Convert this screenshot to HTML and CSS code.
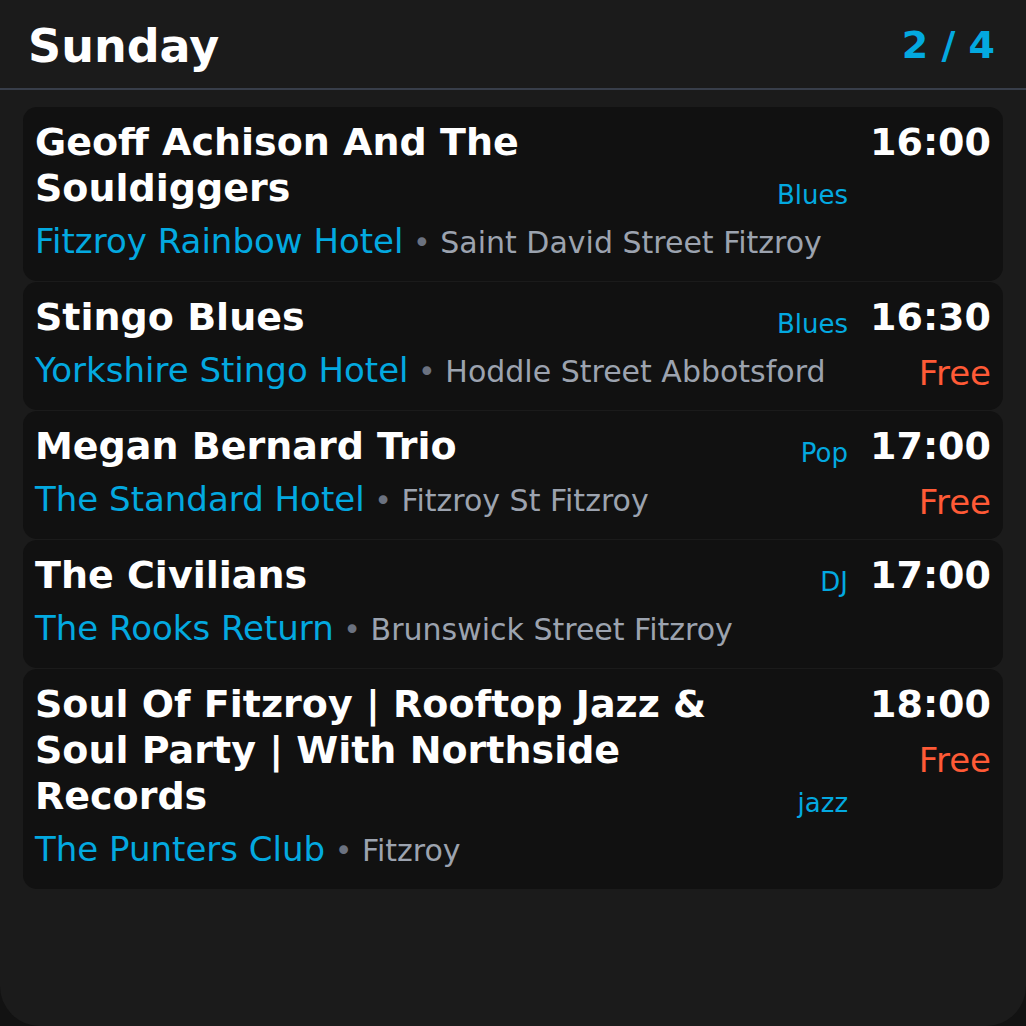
FILE: index.html
```html
<!DOCTYPE html>
<html lang="en">
<head>
<meta charset="utf-8">
<title>Sunday</title>
<link rel="stylesheet" href="styles.css">
</head>
<body>
<div class="app">
  <header class="top">
    <h1 class="day">Sunday</h1>
    <span class="count">2 / 4</span>
  </header>
  <div class="list">
    <div class="card">
      <div class="main">
        <div class="head">
          <div class="title">Geoff Achison And The Souldiggers</div>
          <div class="genre">Blues</div>
        </div>
        <div class="where"><span class="venue">Fitzroy Rainbow Hotel</span><span class="addr"> <span class="dot">•</span> Saint David Street Fitzroy</span></div>
      </div>
      <div class="side">
        <div class="time">16:00</div>
      </div>
    </div>
    <div class="card">
      <div class="main">
        <div class="head">
          <div class="title">Stingo Blues</div>
          <div class="genre">Blues</div>
        </div>
        <div class="where"><span class="venue">Yorkshire Stingo Hotel</span><span class="addr"> <span class="dot">•</span> Hoddle Street Abbotsford</span></div>
      </div>
      <div class="side">
        <div class="time">16:30</div>
        <div class="price">Free</div>
      </div>
    </div>
    <div class="card">
      <div class="main">
        <div class="head">
          <div class="title">Megan Bernard Trio</div>
          <div class="genre">Pop</div>
        </div>
        <div class="where"><span class="venue">The Standard Hotel</span><span class="addr"> <span class="dot">•</span> Fitzroy St Fitzroy</span></div>
      </div>
      <div class="side">
        <div class="time">17:00</div>
        <div class="price">Free</div>
      </div>
    </div>
    <div class="card">
      <div class="main">
        <div class="head">
          <div class="title">The Civilians</div>
          <div class="genre">DJ</div>
        </div>
        <div class="where"><span class="venue">The Rooks Return</span><span class="addr"> <span class="dot">•</span> Brunswick Street Fitzroy</span></div>
      </div>
      <div class="side">
        <div class="time">17:00</div>
      </div>
    </div>
    <div class="card">
      <div class="main">
        <div class="head">
          <div class="title">Soul Of Fitzroy | Rooftop Jazz &amp; Soul Party | With Northside Records</div>
          <div class="genre">jazz</div>
        </div>
        <div class="where"><span class="venue">The Punters Club</span><span class="addr"> <span class="dot">•</span> Fitzroy</span></div>
      </div>
      <div class="side">
        <div class="time">18:00</div>
        <div class="price">Free</div>
      </div>
    </div>
  </div>
</div>
</body>
</html>
```

FILE: styles.css
```css
html, body {
  margin: 0;
  padding: 0;
  background: #121212;
}

body {
  font-family: "DejaVu Sans", "Liberation Sans", sans-serif;
  color: #ffffff;
}

.app {
  width: 1026px;
  min-height: 1026px;
  box-sizing: border-box;
  background: #1b1b1b;
  border-radius: 0 0 40px 40px;
}

.top {
  display: flex;
  align-items: center;
  justify-content: space-between;
  height: 90px;
  padding: 4px 31px 0 28px;
  box-sizing: border-box;
  border-bottom: 2px solid #383e4a;
}

.day {
  margin: 0;
  font-size: 46px;
  font-weight: bold;
  color: #ffffff;
}

.count {
  margin-bottom: 3px;
  font-size: 38px;
  font-weight: bold;
  color: #03a9e0;
}

.list {
  display: flex;
  flex-direction: column;
  gap: 1px;
  padding: 17px 23px 0;
}

.card {
  display: flex;
  background: #111111;
  border-radius: 14px;
  padding: 12px 12px 14px;
}

.main {
  flex: 1;
  min-width: 0;
}

.head {
  display: flex;
  align-items: flex-end;
}

.title {
  flex: 1;
  font-size: 38px;
  font-weight: bold;
  line-height: 46px;
  padding-right: 40px;
}

.genre {
  font-size: 26px;
  color: #03a9e0;
  white-space: nowrap;
  line-height: 1.25;
}

.where {
  margin-top: 5px;
  font-size: 34px;
  line-height: 51px;
  height: 51px;
  white-space: nowrap;
}

.venue {
  color: #03a9e0;
}

.addr {
  font-size: 30px;
  line-height: 1;
  color: #9ca3af;
}

.dot {
  color: #6b7280;
}

.side {
  margin-left: 22px;
  text-align: right;
}

.time {
  font-size: 38px;
  font-weight: bold;
  line-height: 46px;
}

.price {
  margin-top: 11px;
  font-size: 34px;
  line-height: 44px;
  color: #ff5a36;
}
```
